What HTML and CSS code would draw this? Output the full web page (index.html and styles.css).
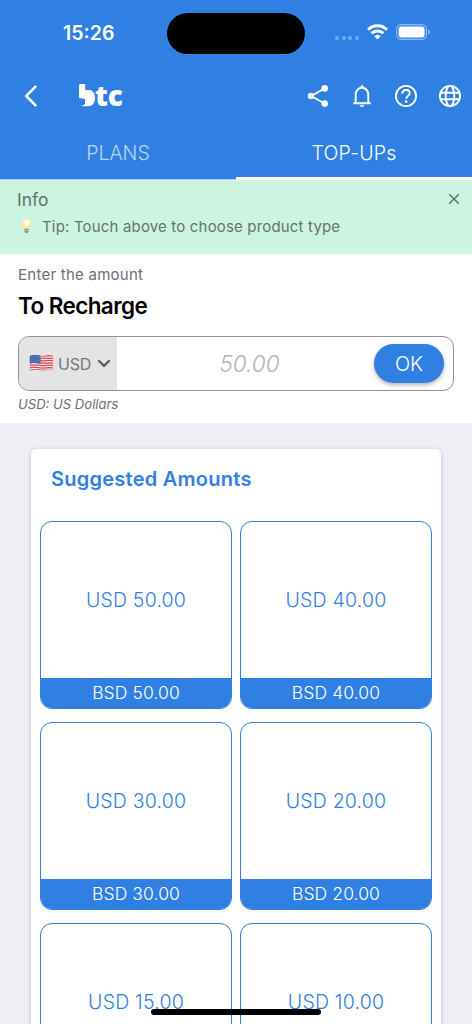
FILE: index.html
```html
<!DOCTYPE html>
<html lang="en">
<head>
<meta charset="utf-8">
<title>Top-ups</title>
<link rel="stylesheet" href="styles.css">
</head>
<body>
<div class="screen">
  <header class="header">
    <div class="status">
      <span class="time">15:26</span>
      <span class="island"></span>
      <span class="dots"><i></i><i></i><i></i><i></i></span>
      <svg class="wifi" width="21" height="16" viewBox="0 0 21 16" fill="none" stroke="#fff" stroke-width="3"><path d="M1.1 5.7a13.4 13.4 0 0 1 18.8 0M4.6 9.3a8.4 8.4 0 0 1 11.8 0"/><path d="M10.5 15.6 7.2 12.2a4.8 4.8 0 0 1 6.6 0z" fill="#fff" stroke="none"/></svg>
      <svg class="battery" width="35" height="16" viewBox="0 0 35 16"><rect x=".6" y=".6" width="30" height="14.8" rx="4.8" fill="none" stroke="#fff" stroke-opacity=".45" stroke-width="1.1"/><rect x="2.6" y="2.6" width="26" height="10.8" rx="3" fill="#fff"/><path d="M32.3 5.500c2.200.8 2.200 4.200 0 5z" fill="#fff" fill-opacity=".5"/></svg>
    </div>
    <div class="toolbar">
      <svg class="back" width="14" height="22" viewBox="0 0 14 22"><path d="M11.500 1.600 2.200 11l9.300 9.400" fill="none" stroke="#fff" stroke-width="2.500" stroke-linecap="round" stroke-linejoin="round"/></svg>
      <svg class="logo" width="46" height="26" viewBox="0 0 46 26">
        <text class="logo-text" y="23"><tspan x="-.2">b</tspan><tspan x="17">t</tspan><tspan x="29.800">c</tspan></text>
        <path class="logo-cut" d="M0 15.300h7v10H0z"/>
        <path class="logo-tail" d="M1 2.300q2-1.300 4.700-.8v6.200c5.500-2.200 10.900 1.400 10.900 7.600 0 6.600-6.400 9.200-13.800 7.600 3.500-.5 5.400-2.500 5.400-4.600C6.800 15.200 3.900 14.500 1 15z"/>
      </svg>
      <div class="actions">
        <svg width="24" height="24" viewBox="0 0 24 24" fill="#fff"><path d="M18.500 4.500 5.300 12l13.200 7.500" fill="none" stroke="#fff" stroke-width="1.900"/><circle cx="18.700" cy="4.400" r="3.300"/><circle cx="5" cy="12" r="3.300"/><circle cx="18.700" cy="19.600" r="3.300"/></svg>
        <svg width="24" height="24" viewBox="0 0 24 24" fill="none" stroke="#fff" stroke-width="1.900"><path d="M3.300 19.200h17.400M5.700 19v-8.200c0-4.100 2.700-7 6.300-7s6.300 2.900 6.300 7V19"/><path d="M10.300 4V3a1.700 1.700 0 0 1 3.400 0v1zM9.800 21.300h4.400a2.200 1.800 0 0 1-4.400 0z" fill="#fff" stroke="none"/></svg>
        <svg width="24" height="24" viewBox="0 0 24 24" fill="none" stroke="#fff" stroke-width="1.900"><circle cx="12" cy="12" r="10.100"/><path d="M8.400 9.600c0-2.200 1.500-3.600 3.700-3.600 2.100 0 3.600 1.300 3.600 3.200 0 2.500-3.500 2.900-3.500 5.600"/><circle cx="12.200" cy="17.600" r="1.300" fill="#fff" stroke="none"/></svg>
        <svg width="24" height="24" viewBox="0 0 24 24" fill="none" stroke="#fff" stroke-width="1.900"><circle cx="12" cy="12" r="10.100"/><ellipse cx="12" cy="12" rx="4.300" ry="10.100"/><path d="M2.500 8.700h19M2.500 15.300h19"/></svg>
      </div>
    </div>
    <nav class="tabs">
      <div class="tab"><span>PLANS</span></div>
      <div class="tab active"><span>TOP-UPs</span></div>
    </nav>
  </header>

  <section class="info">
    <div class="info-head">
      <span class="info-title">Info</span>
      <svg width="12" height="12" viewBox="0 0 12 12"><path d="m1.200 1.200 9.600 9.600m0-9.600-9.600 9.600" stroke="#606b67" stroke-width="1.400"/></svg>
    </div>
    <div class="tip">
      <svg width="11" height="16" viewBox="0 0 11 16"><defs><radialGradient id="glow" cx=".5" cy=".35" r=".65"><stop stop-color="#fffef0"/><stop offset=".5" stop-color="#fff4c4"/><stop offset="1" stop-color="#e8cf78"/></radialGradient></defs><path d="M5.500.7C2.500.7.700 2.700.700 5.200c0 2.500 2.200 3.400 2.600 6h4.400c.4-2.600 2.600-3.500 2.600-6C10.300 2.700 8.500.7 5.500.7z" fill="url(#glow)"/><path d="M3.400 11.100h4.200v2.400L6.500 15.300h-2l-1.100-1.800z" fill="#8d9390"/><path d="M3.500 12.500h4" stroke="#cdd2cf" stroke-width=".7"/></svg>
      <span>Tip: Touch above to choose product type</span>
    </div>
  </section>

  <section class="form">
    <div class="label">Enter the amount</div>
    <h1 class="title">To Recharge</h1>
    <div class="field">
      <div class="currency">
        <svg width="25" height="19" viewBox="0 0 25 19"><defs><clipPath id="flag"><path d="M.8 2C5-.1 8.500 1.500 12.500 1.700 17 2 20 .2 24.200 1.700v14.600c-4-1.600-7.500.4-11.700.2-4-.1-7.700-1.800-11.700.6z"/></clipPath></defs><g clip-path="url(#flag)"><path fill="#f2eeee" d="M0 0h25v19H0z"/><g fill="none" stroke="#dc4650" stroke-width="1.250"><path d="M0 2.200C5 0 8.500 1.700 12.500 2S20 .8 25 2.200M0 4.600c5-2.200 8.500-.5 12.500-.2S20 3.200 25 4.600M0 7c5-2.200 8.500-.5 12.500-.2S20 5.600 25 7M0 9.400c5-2.200 8.500-.5 12.500-.2S20 8 25 9.400M0 11.800c5-2.200 8.500-.5 12.500-.2s7.500-1.200 12.500.2M0 14.200c5-2.200 8.500-.5 12.500-.2s7.500-1.200 12.500.2M0 16.600c5-2.200 8.500-.5 12.500-.2s7.500-1.200 12.500.2"/></g><path d="M0 0h11.500v9.500C7.500 9.200 4 8 0 9.900z" fill="#3b67ae"/><path d="M2 3h9M2 5h9M2 7h9" stroke="#9bb5dc" stroke-width=".7" stroke-dasharray=".8 1.200"/></g></svg>
        <span class="code">USD</span>
        <svg width="14" height="9" viewBox="0 0 14 9"><path d="m1.300 1.300 5.700 5.600 5.700-5.600" fill="none" stroke="#555b60" stroke-width="2.200"/></svg>
      </div>
      <div class="amount">50.00</div>
      <div class="ok">OK</div>
    </div>
    <div class="note">USD: US Dollars</div>
  </section>

  <main class="content">
    <div class="card">
      <h2 class="card-title">Suggested Amounts</h2>
      <div class="grid">
        <div class="tile"><div class="usd">USD 50.00</div><div class="bsd">BSD 50.00</div></div>
        <div class="tile"><div class="usd">USD 40.00</div><div class="bsd">BSD 40.00</div></div>
        <div class="tile"><div class="usd">USD 30.00</div><div class="bsd">BSD 30.00</div></div>
        <div class="tile"><div class="usd">USD 20.00</div><div class="bsd">BSD 20.00</div></div>
        <div class="tile"><div class="usd">USD 15.00</div></div>
        <div class="tile"><div class="usd">USD 10.00</div></div>
      </div>
    </div>
  </main>
  <div class="home-bar"></div>
</div>
</body>
</html>
```
FILE: styles.css
```css
* { box-sizing: border-box; }
body { margin: 0; font-family: Inter, "Liberation Sans", sans-serif; }
svg { display: block; flex: none; }
.screen { position: relative; width: 472px; height: 1024px; overflow: hidden; background: #efeef4; display: flex; flex-direction: column; }
.header { height: 180px; flex: none; background: #3080e3; color: #fff; }
.status { height: 66px; display: flex; align-items: center; padding-left: 63px; }
.time { width: 104px; font-size: 19.500px; font-weight: 600; }
.island { width: 138px; height: 41px; border-radius: 21px; background: #000; }
.dots { display: flex; gap: 2.600px; margin: 9px 0 0 30px; }
.dots i { width: 4px; height: 4px; border-radius: 1.500px; background: #6ca6ec; }
.wifi { margin: -2px 0 0 8px; }
.battery { margin: -2px 0 0 8px; }
.toolbar { height: 60px; display: flex; align-items: center; padding: 0 10px 0 24px; }
.logo { margin-left: 40px; overflow: visible; }
.logo-text { font: 800 28px "Open Sans", sans-serif; fill: #fff; }
.logo-cut { fill: #3080e3; }
.logo-tail { fill: #fff; }
.actions { margin-left: auto; display: flex; gap: 20px; }
.tabs { display: flex; height: 54px; }
.tab { flex: 1; display: flex; justify-content: center; padding-top: 15px; font-size: 19.500px; line-height: 24px; font-weight: 350; color: #b9d4f6; border-bottom: 1px solid #a9cbf4; }
.tab.active { color: #fff; border-bottom: 3px solid #fff; letter-spacing: .2px; }
.info { height: 74px; flex: none; background: #cbf5e1; color: #65736d; padding: 8px 12px 0 17px; border-top: 1px solid #dcefe6; }
.info-head { display: flex; justify-content: space-between; align-items: center; height: 20px; }
.info-title { font-size: 17.500px; }
.tip { display: flex; align-items: center; height: 20px; margin-top: 7px; padding-left: 4px; gap: 10px; font-size: 15px; letter-spacing: .17px; }
.form { height: 169px; flex: none; background: #fff; padding: 11px 18px 0; }
.label { font-size: 15px; line-height: 20px; letter-spacing: .25px; color: #6b7075; }
.title { margin: 6px 0 0; font-size: 22.500px; line-height: 30px; font-weight: 600; letter-spacing: -.6px; color: #000; }
.field { height: 55px; margin-top: 15px; border: 1px solid #929299; border-radius: 11px; display: flex; align-items: center; overflow: hidden; }
.currency { width: 98px; height: 100%; background: #e4e4e4; display: flex; align-items: center; padding-left: 10px; }
.code { margin: 0 6px 0 4px; font-size: 16px; width: 33px; letter-spacing: -.2px; color: #72777d; }
.amount { flex: 1; text-align: center; font-size: 22.500px; font-style: italic; font-weight: 300; color: #b4b4b4; padding-left: 8px; }
.ok { width: 70px; height: 39px; margin-right: 9px; border-radius: 20px; background: #3080e3; color: #fff; font-size: 20px; font-weight: 350; line-height: 40px; text-align: center; box-shadow: 0 2px 4px rgba(0,0,0,.3); }
.note { margin-top: 4px; font-size: 13.100px; line-height: 18px; font-style: italic; color: #6b7075; }
.content { flex: 1; padding: 26px 31px 0; min-height: 0; }
.card { background: #fff; height: 620px; border-radius: 5px; padding: 18px 9px 0; box-shadow: 0 1px 4px rgba(0,0,0,.22); }
.card-title { margin: 0 0 30px 11px; font-size: 20px; line-height: 24px; font-weight: 600; letter-spacing: .25px; color: #3080e3; }
.grid { display: grid; grid-template-columns: 192px 192px; gap: 13px 8px; }
.tile { height: 188px; border: 1px solid #3080e3; border-radius: 12px; overflow: hidden; display: flex; flex-direction: column; }
.usd { height: 156px; flex: none; line-height: 156px; text-align: center; font-size: 19.500px; letter-spacing: .2px; font-weight: 350; color: #3080e3; }
.bsd { flex: 1; background: #3080e3; color: #fff; font-size: 17.500px; letter-spacing: .1px; line-height: 30px; text-align: center; font-weight: 350; }
.home-bar { position: absolute; left: 151px; top: 1009px; width: 170px; height: 6px; border-radius: 3px; background: #000; }
```
